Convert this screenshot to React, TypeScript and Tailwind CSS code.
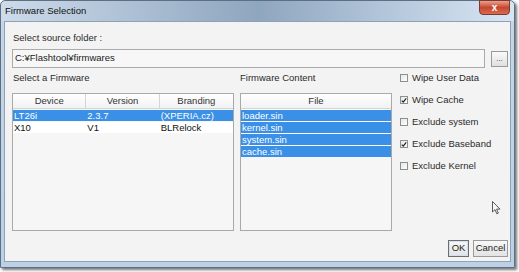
import { useState } from "react";

const font = { fontFamily: '"Liberation Sans", Arial, sans-serif' };

type Fw = { device: string; version: string; branding: string };

const firmwares: Fw[] = [
  { device: "LT26i", version: "2.3.7", branding: "(XPERIA.cz)" },
  { device: "X10", version: "V1", branding: "BLRelock" },
];

const files = ["loader.sin", "kernel.sin", "system.sin", "cache.sin"];

const options = [
  { label: "Wipe User Data", checked: false },
  { label: "Wipe Cache", checked: true },
  { label: "Exclude system", checked: false },
  { label: "Exclude Baseband", checked: true },
  { label: "Exclude Kernel", checked: false },
];

function CheckBox({ label, checked }: { label: string; checked: boolean }) {
  return (
    <div className="flex h-[12px] items-center gap-[4px]">
      <span className="flex h-[8px] w-[8px] items-center justify-center border border-[#8e8f8f] bg-gradient-to-br from-[#e6e6e6] to-white">
        {checked && (
          <svg viewBox="0 0 8 8" className="h-[7px] w-[7px]">
            <path d="M1 4.2 L3 6.2 L7 1.2" fill="none" stroke="#222" strokeWidth={1.6} />
          </svg>
        )}
      </span>
      <span className="text-[9.5px] text-[#2b2b2b]">{label}</span>
    </div>
  );
}

export default function App() {
  const [selected] = useState(0);

  return (
    <div className="relative h-[272px] w-[519px] overflow-hidden bg-white" style={font}>
      {/* window frame */}
      <div className="flex h-[268px] w-[515px] flex-col rounded-t-[5px] border border-[#5f6f82] bg-gradient-to-b from-[#c5d6e8] to-[#bcd0e6] px-[3px] pb-[5px] shadow-[2px_2px_3px_rgba(0,0,0,0.55)]">
        {/* title bar */}
        <div className="relative -mx-[3px] flex h-[20px] items-center rounded-t-[5px] bg-gradient-to-r from-[#cddbea] via-[#8fa6bf] to-[#d8e6f4] pl-[4px]">
          <span className="text-[9.5px] text-[#111]">Firmware Selection</span>
          <div className="absolute right-[4px] top-[-1px] flex h-[15px] w-[31px] items-center justify-center rounded-b-[4px] border border-[#7a3a30] bg-gradient-to-b from-[#e8a08e] via-[#c7462f] to-[#d86a50]">
            <span className="text-[10px] font-bold leading-none text-white">x</span>
          </div>
        </div>

        {/* client area */}
        <div className="flex flex-1 flex-col border border-[#8ea1b6] bg-[#f3f3f3] pl-[7px] pr-[2px] pt-[10px]">
          <div className="h-[12px] pl-[1px] text-[9.5px] leading-[12px] text-[#2b2b2b]">Select source folder :</div>

          <div className="mt-[5px] flex items-center gap-[6px]">
            <div className="flex h-[19px] flex-1 items-center border border-[#aaaaaa] bg-[#f7f7f7] pl-[2px] text-[9.5px] text-[#1a1a1a]">
              C:¥Flashtool¥firmwares
            </div>
            <div className="flex h-[16px] w-[17px] items-center justify-center border border-[#9a9a9a] bg-gradient-to-b from-[#fafafa] to-[#e0e0e0] text-[8px] leading-none text-[#333]">
              ...
            </div>
          </div>

          <div className="mt-[4px] flex">
            {/* firmware list */}
            <div className="flex w-[222px] flex-col">
              <div className="h-[12px] pl-[1px] text-[9.5px] leading-[12px] text-[#2b2b2b]">Select a Firmware</div>
              <div className="mt-[9px] h-[138px] border border-[#a9a9a9] bg-[#f6f6f6]">
                <div className="grid h-[15px] grid-cols-3 border-b border-[#d5d5d5] bg-gradient-to-b from-white to-[#f1f2f4] text-[9.5px] text-[#333]">
                  <div className="flex items-center justify-center border-r border-[#d5d5d5]">Device</div>
                  <div className="flex items-center justify-center border-r border-[#d5d5d5]">Version</div>
                  <div className="flex items-center justify-center">Branding</div>
                </div>
                {firmwares.map((fw, i) => (
                  <div
                    key={fw.device}
                    className={`mt-[1px] grid h-[11px] grid-cols-3 text-[9.5px] leading-[11px] ${
                      i === selected ? "bg-[#3a8fe6] text-white" : "bg-white text-[#111]"
                    }`}
                  >
                    <div className="pl-[1px]">{fw.device}</div>
                    <div className="pl-[1px]">{fw.version}</div>
                    <div className="pl-[1px]">{fw.branding}</div>
                  </div>
                ))}
              </div>
            </div>

            {/* firmware content */}
            <div className="ml-[6px] flex w-[152px] flex-col">
              <div className="h-[12px] text-[9.5px] leading-[12px] text-[#2b2b2b]">Firmware Content</div>
              <div className="mt-[9px] h-[138px] border border-[#a9a9a9] bg-[#f6f6f6]">
                <div className="flex h-[15px] items-center justify-center border-b border-[#d5d5d5] bg-gradient-to-b from-white to-[#f1f2f4] text-[9.5px] text-[#333]">
                  File
                </div>
                <div className="flex flex-col gap-[1px] bg-white pt-[1px]">
                  {files.map((f) => (
                    <div key={f} className="h-[11px] bg-[#3a8fe6] pl-[1px] text-[9.5px] leading-[11px] text-white">
                      {f}
                    </div>
                  ))}
                </div>
              </div>
            </div>

            {/* options */}
            <div className="ml-[8px] flex flex-col gap-[10px]">
              {options.map((o) => (
                <CheckBox key={o.label} label={o.label} checked={o.checked} />
              ))}
            </div>
          </div>

          <div className="mt-[9px] flex justify-end gap-[4px]">
            <div className="flex h-[17px] w-[21px] items-center justify-center border border-[#6d6d6d] bg-gradient-to-b from-[#f8f8f8] to-[#e3e3e3] text-[9.5px] text-[#222] shadow-[inset_0_0_0_1px_#cfe0f0]">
              OK
            </div>
            <div className="flex h-[17px] w-[35px] items-center justify-center border border-[#9a9a9a] bg-gradient-to-b from-[#f8f8f8] to-[#e3e3e3] text-[9.5px] text-[#222]">
              Cancel
            </div>
          </div>
        </div>
      </div>

      {/* mouse pointer */}
      <svg viewBox="0 0 9 14" className="absolute left-[492px] top-[201px] h-[14px] w-[9px]">
        <path d="M0.5 0.5 L0.5 11 L3 8.6 L4.8 12.8 L6.3 12.1 L4.6 8.1 L8 8.1 Z" fill="#f6f6f6" stroke="#333" strokeWidth={0.8} />
      </svg>
    </div>
  );
}
